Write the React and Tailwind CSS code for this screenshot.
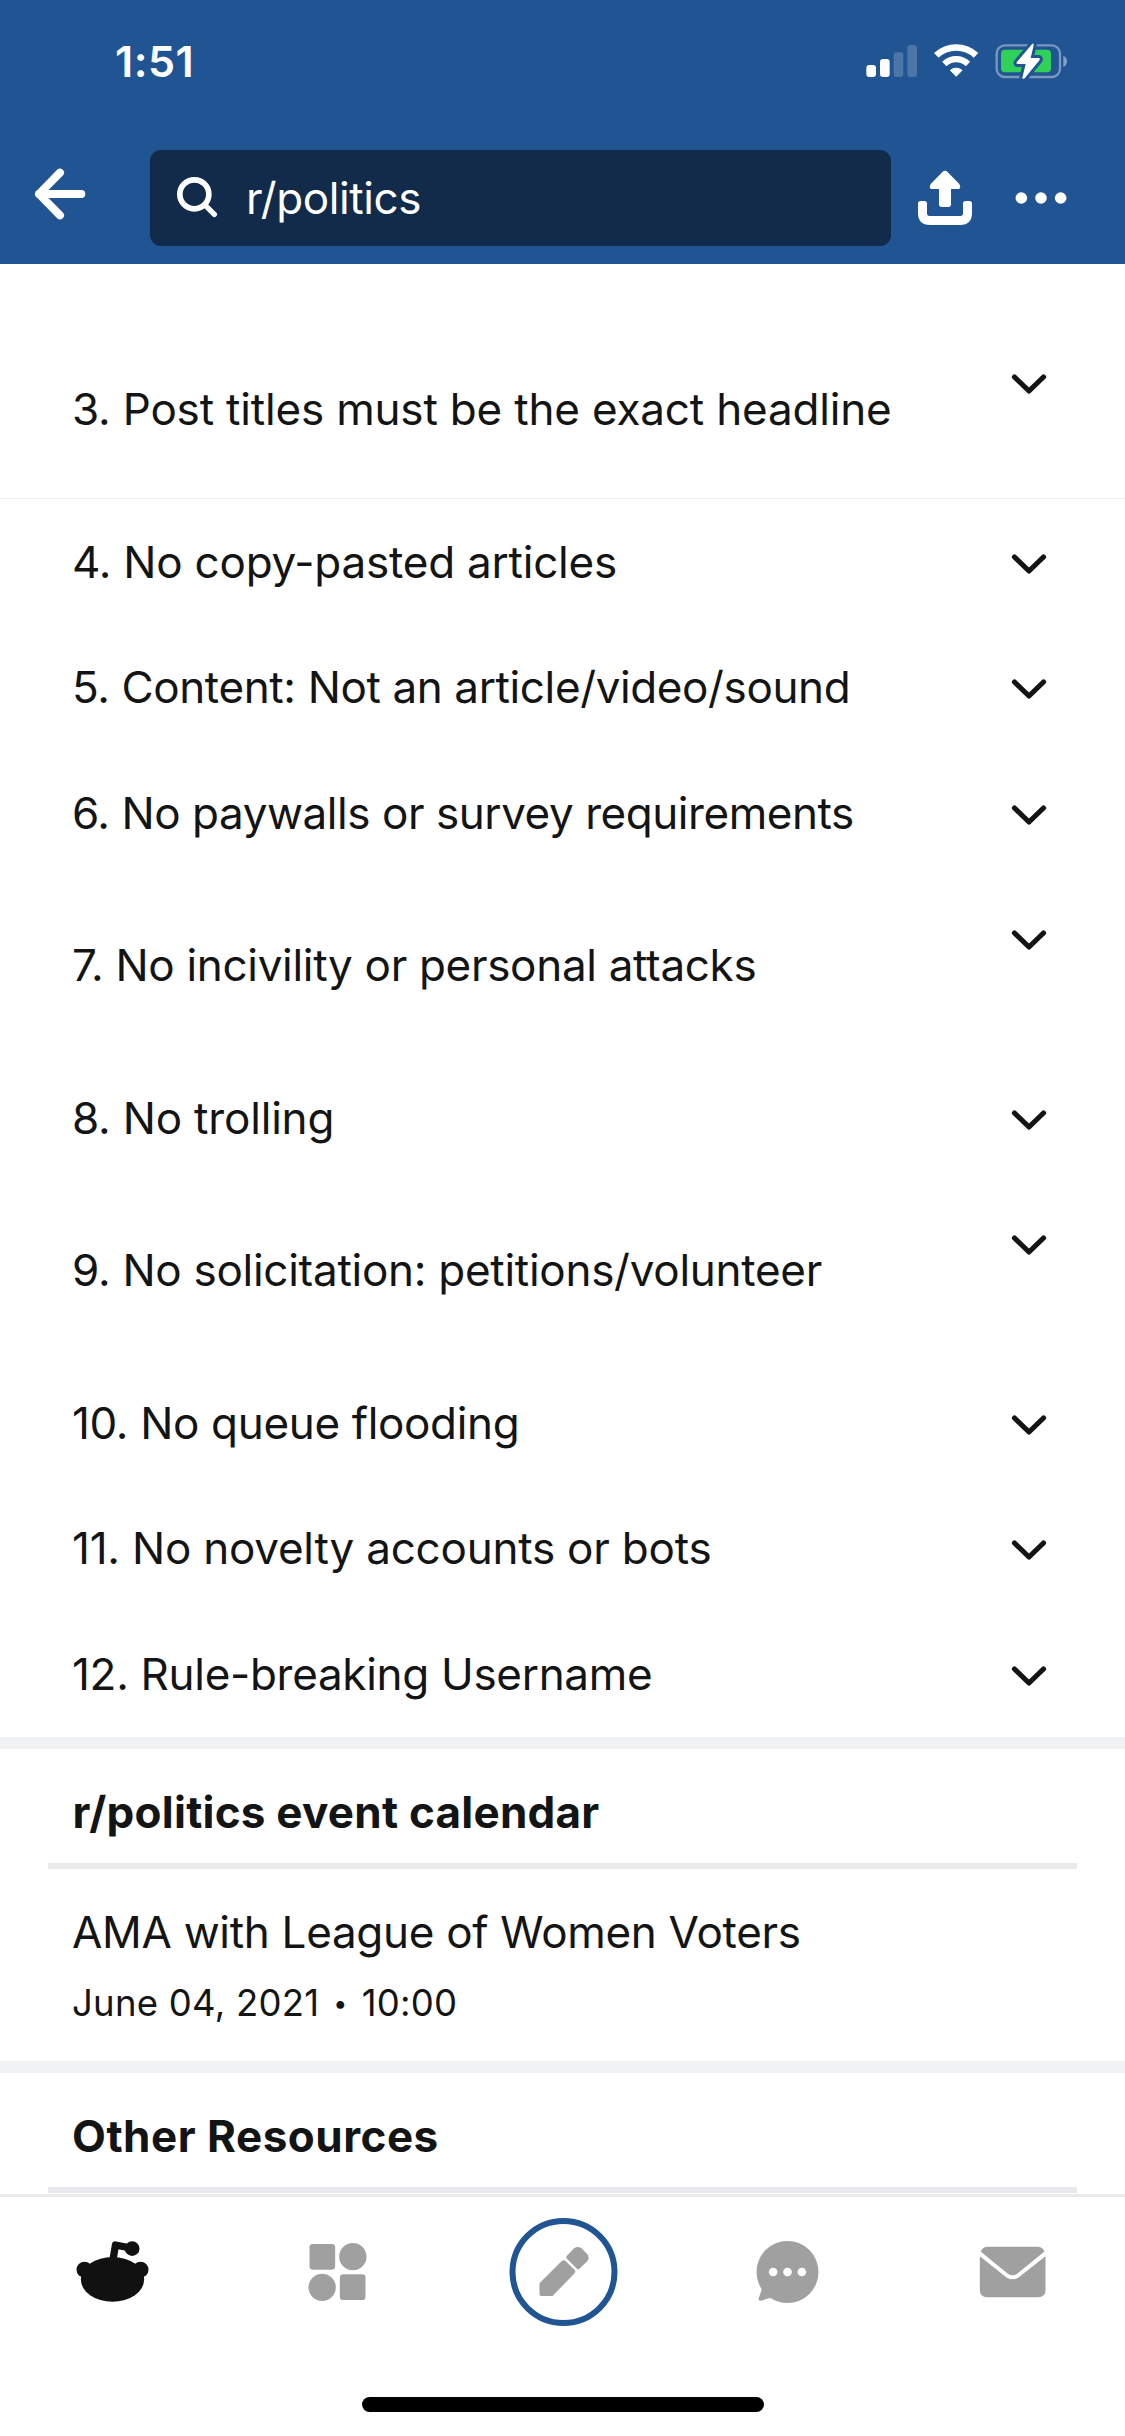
const rules = [
  { text: "3. Post titles must be the exact headline", size: "h-[179.5px]", track: "tracking-[-0.18px]", line: true },
  { text: "4. No copy-pasted articles", size: "h-[125.5px]", track: "tracking-[-0.22px]" },
  { text: "5. Content: Not an article/video/sound", size: "h-[125.5px]", track: "tracking-[-0.38px]" },
  { text: "6. No paywalls or survey requirements", size: "h-[125.5px]", track: "tracking-[-0.44px]" },
  { text: "7. No incivility or personal attacks", size: "h-[179.5px]", track: "tracking-[-0.31px]" },
  { text: "8. No trolling", size: "h-[125.5px]", track: "tracking-[-0.18px]" },
  { text: "9. No solicitation: petitions/volunteer", size: "h-[179.5px]", track: "tracking-[-0.27px]" },
  { text: "10. No queue flooding", size: "h-[125.5px]", track: "tracking-[-0.34px]" },
  { text: "11. No novelty accounts or bots", size: "h-[125.5px]", track: "tracking-[-0.22px]" },
  { text: "12. Rule-breaking Username", size: "h-[125.5px]", track: "tracking-[-0.3px]" },
];

function StatusIcons() {
  const bolt = "M547 41 Q552 40 551 46 L542 84 H567 Q571 85 569 90 L524 145 Q518 149 517 143 L527 102 H502 Q498 101 500 97 Z";
  return (
    <svg className="h-[42px] w-[208px]" viewBox="36 30 624 126" fill="none">
      <rect x="49" y="105" width="29" height="36" rx="9" fill="#fff" />
      <rect x="90" y="87" width="29" height="54" rx="9" fill="#fff" />
      <rect x="131" y="67" width="29" height="74" rx="9" fill="#fff" fillOpacity="0.2" />
      <rect x="172" y="45" width="29" height="96" rx="9" fill="#fff" fillOpacity="0.2" />
      <path d="M259 76A87 87 0 0 1 378 76" stroke="#fff" strokeWidth="20" />
      <path d="M283 102A51 51 0 0 1 354 102" stroke="#fff" strokeWidth="19" />
      <path d="M318.500 139L301 121A27 27 0 0 1 336 121Z" fill="#fff" stroke="#fff" strokeWidth="3" strokeLinejoin="round" />
      <rect x="440" y="46" width="190" height="95" rx="25" stroke="#fff" strokeOpacity="0.4" strokeWidth="7" />
      <path d="M640 77Q651 82 651 94T640 111Z" fill="#fff" fillOpacity="0.45" />
      <rect x="453" y="59" width="150" height="68" rx="12" fill="#30d158" />
      <path d={bolt} fill="#215493" stroke="#215493" strokeWidth="18" strokeLinejoin="round" />
      <path d={bolt} fill="#fff" />
    </svg>
  );
}

function Chevron() {
  return (
    <svg className="mt-[52.5px] h-[24px] w-[40px]" viewBox="0 0 40 24" fill="none" stroke="#131415" strokeWidth="5.2" strokeLinecap="round" strokeLinejoin="round">
      <path d="M5.500 5L20 19L34.500 5" />
    </svg>
  );
}

function Header() {
  return (
    <header className="flex h-[264px] shrink-0 flex-col bg-[#215493] text-white">
      <div className="flex h-[150px] items-start justify-between pr-[55px] pl-[115px]">
        <span className="mt-[34px] text-[43px] leading-[54px] font-semibold tracking-[0.5px]">1:51</span>
        <div className="mt-[40px]"><StatusIcons /></div>
      </div>
      <div className="flex h-24 items-center pl-[30px]">
        <svg className="h-24 w-[60px]" viewBox="30 390 180 288" fill="none" stroke="#fff" strokeWidth="24" strokeLinecap="round" strokeLinejoin="round">
          <path d="M184 522H57M120 458L57 522L120 586" />
        </svg>
        <div className="ml-[60px] flex h-24 w-[741px] items-center rounded-[11px] bg-[#122b4b] pl-5">
          <svg className="h-24 w-[54px]" viewBox="450 390 162 288" fill="none" stroke="#fff">
            <circle cx="523" cy="523" r="43.5" strokeWidth="17" />
            <path d="M556 556L583 583" strokeWidth="16" strokeLinecap="round" />
          </svg>
          <span className="ml-[22px] text-[44px] leading-[56px] tracking-[-0.4px]">r/politics</span>
        </div>
        <svg className="ml-[19px] h-24 w-[70px]" viewBox="180 360 210 288" fill="#fff">
          <path d="M278 425Q285 419 292 425L328 462Q333 470 328 477H303V523Q303 531 295 531H275Q267 531 267 523V477H242Q237 470 242 462Z" />
          <path d="M204 521Q204 513 212 513H223Q231 513 231 521V550Q231 558 239 558H331Q339 558 339 550V521Q339 513 347 513H358Q366 513 366 521V549Q366 585 330 585H240Q204 585 204 549Z" />
        </svg>
        <svg className="ml-[30px] h-24 w-[62px]" viewBox="480 360 186 288" fill="#fff">
          <circle cx="514" cy="504" r="17.5" />
          <circle cx="573" cy="504" r="17.5" />
          <circle cx="632" cy="504" r="17.5" />
        </svg>
      </div>
    </header>
  );
}

function NavBar() {
  return (
    <nav className="h-[242px] shrink-0 border-t-[3px] border-[#eaeaec] bg-white">
      <div className="grid h-[150px] grid-cols-5 place-items-center">
        <svg className="size-[120px]" viewBox="-22.5 36 360 360" fill="#111">
          <ellipse cx="156" cy="238" rx="95" ry="67" />
          <circle cx="72" cy="209" r="24" />
          <circle cx="240" cy="209" r="24" />
          <circle cx="215" cy="146" r="22" />
          <path d="M157 182L165 135L215 145" fill="none" stroke="#111" strokeWidth="22" strokeLinejoin="round" />
        </svg>
        <svg className="size-[120px]" viewBox="652.5 36 360 360" fill="#a0a0a0">
          <rect x="747" y="132" width="77" height="77" rx="10" />
          <circle cx="877" cy="170" r="41" />
          <circle cx="785" cy="262" r="41" />
          <rect x="838" y="223" width="77" height="77" rx="10" />
        </svg>
        <svg className="size-[120px]" viewBox="37.5 36 360 360" fill="#a0a0a0">
          <circle cx="219" cy="216" r="153" fill="none" stroke="#215493" strokeWidth="18" />
          <path d="M147 250L214 183Q220 178 226 184L252 209Q257 215 251 221L186 288H152Q147 288 147 283Z" />
          <path d="M229 167L251 145Q262 137 273 145L290 162Q299 173 290 184L267 206Q263 210 259 206L229 176Q225 171 229 167Z" />
        </svg>
        <svg className="size-[120px]" viewBox="712.5 36 360 360" fill="#a0a0a0">
          <circle cx="891" cy="216" r="93" />
          <path d="M812 255Q815 266 812 274L804 296Q804 304 812 302L834 295Q840 292 850 296L880 240Z" />
          <g fill="#fff">
            <circle cx="848" cy="216" r="13" />
            <circle cx="891" cy="216" r="13" />
            <circle cx="934" cy="216" r="13" />
          </g>
        </svg>
        <svg className="size-[120px]" viewBox="7.5 36 360 360" fill="#a0a0a0">
          <path d="M92 152Q98 140 111 140H261Q275 140 281 152Q282 155 279 157L199 222Q186 230 173 222L93 157Q90 155 92 152Z" />
          <path d="M88 169L169 233Q186 243 203 233L285 169V270Q285 292 263 292H110Q88 292 88 270Z" />
        </svg>
      </div>
      <div className="mx-auto mt-[50px] h-[15px] w-[402px] rounded-[8px] bg-black" />
    </nav>
  );
}

export default function App() {
  return (
    <div className="flex h-[2436px] w-[1125px] flex-col overflow-hidden bg-white font-['Inter',sans-serif] text-[44px] leading-[56px] text-[#131415]">
      <Header />
      <main className="h-[1930px] shrink-0 overflow-hidden">
        <ul className="pt-[55.5px] pb-[0.5px]">
          {rules.map((rule) => (
            <li key={rule.text} className={`flex justify-between pr-[76px] pl-[72px] ${rule.size} ${rule.line ? "border-b border-[#f1f2f3]" : ""}`}>
              <span className={`self-center whitespace-nowrap ${rule.track}`}>{rule.text}</span>
              <Chevron />
            </li>
          ))}
        </ul>
        <section className="h-[324px] border-t-[12px] border-[#f1f2f4]">
          <h2 className="mx-12 h-[120px] border-b-[6px] border-[#e9eaec] pt-[35px] pl-[24.5px] font-bold tracking-[0.24px]">r/politics event calendar</h2>
          <p className="pt-[35px] pl-[72px] tracking-[-0.3px]">AMA with League of Women Voters</p>
          <p className="flex items-center pt-[19px] pl-[72px] text-[36.5px] leading-[48px] tracking-[0.25px]">
            June 04, 2021
            <span className="mx-[14px] text-[25px] leading-[48px]">•</span>
            10:00
          </p>
        </section>
        <section className="border-t-[12px] border-[#f1f2f4]">
          <h2 className="mx-12 h-[120px] border-b-[6px] border-[#e9e9ed] pt-[35px] pl-[24px] font-bold tracking-[0.5px]">Other Resources</h2>
        </section>
      </main>
      <NavBar />
    </div>
  );
}
